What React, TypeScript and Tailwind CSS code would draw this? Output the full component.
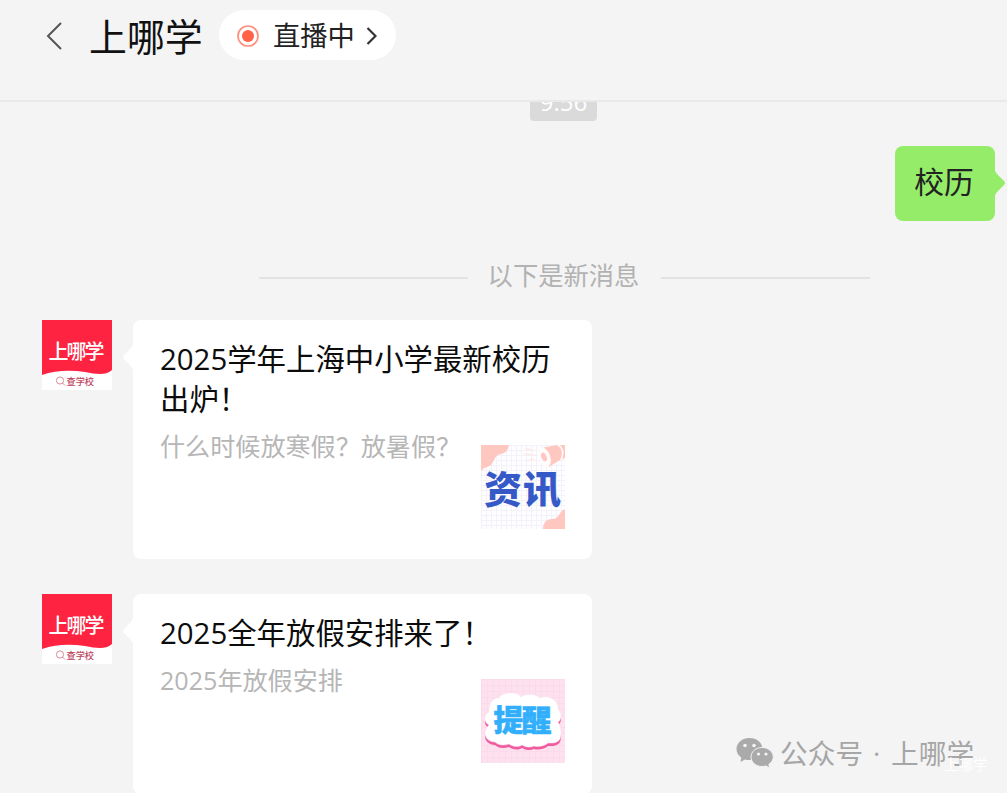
import React from 'react';

interface Message {
  title: string[];
  summary: string;
  thumb: React.ReactNode;
  cardClass: string;
}

function Avatar() {
  return (
    <svg width="70" height="70" viewBox="0 0 70 70" className="shrink-0">
      <rect width="70" height="70" fill="#ffffff" />
      <path d="M0 0H70V50C63 56 54 54 43 52C29 50 14 50 0 55Z" fill="#fd2341" />
      <text
        x="6.5"
        y="39"
        fontSize="20"
        fontWeight="500"
        fill="#ffffff"
        textLength="56"
        fontFamily="'Noto Sans CJK SC', sans-serif"
      >
        上哪学
      </text>
      <circle cx="18" cy="60.5" r="3.6" fill="none" stroke="#d8808f" strokeWidth="0.9" />
      <path d="M20.5 63L23 65.5" stroke="#d8808f" strokeWidth="0.9" />
      <text
        x="24.5"
        y="64.5"
        fontSize="9.2"
        fontWeight="500"
        fill="#bd4560"
        textLength="27.5"
        fontFamily="'Noto Sans CJK SC', sans-serif"
      >
        查学校
      </text>
    </svg>
  );
}

function NewsThumb() {
  return (
    <svg width="84" height="84" viewBox="0 0 84 84">
      <defs>
        <pattern id="news-grid" width="5" height="5" patternUnits="userSpaceOnUse">
          <rect width="5" height="5" fill="#fefdff" />
          <path d="M0 0.5H5M0.5 0V5" stroke="#f3f2f9" strokeWidth="1" />
        </pattern>
      </defs>
      <rect width="84" height="84" fill="url(#news-grid)" />
      <path d="M0 0H28C27 5 25 8 20 9C15 10 14 13 12 17C9 23 4 21 0 26Z" fill="#fec8c0" />
      <path d="M84 84H62C62 78 65 74 71 74C79 74 77 67 84 64Z" fill="#fec8c0" />
      {/* megaphone */}
      <path d="M44 3L52 6M43 9L54 10M45 16L53 14" stroke="#feebe8" strokeWidth="1.6" />
      <path d="M60 3L76 0H84V13L77 16L68 22Z" fill="#fec8c0" />
      <path d="M77 0C82 3 83 8 80 15" fill="none" stroke="#fffafa" strokeWidth="1.6" />
      <ellipse cx="63.5" cy="12" rx="5.6" ry="10" transform="rotate(-22 63.5 12)" fill="#fffdfd" />
      <ellipse cx="63" cy="12" rx="2.6" ry="4.6" transform="rotate(-22 63 12)" fill="#fec8c0" />
      <text
        x="3"
        y="57.5"
        fontSize="38"
        fontWeight="900"
        fill="#3559c7"
        textLength="77"
        fontFamily="'Noto Sans CJK SC', sans-serif"
      >
        资讯
      </text>
    </svg>
  );
}

const CLOUD =
  'M8 33C7 24 13 18 18 19C20 13 37 12 40 18C45 14 56 15 59 19C68 15 78 22 77 30C82 35 80 42 77 43C80 48 81 55 79 60C76 65 69 64 67 64C62 68 56 68 53 67C49 69 44 68 41 66C36 69 31 67 28 65C22 67 17 66 14 63C6 63 2 56 5 51C6 48 7 47 8 46C2 43 3 36 8 33Z';

function ReminderThumb() {
  return (
    <svg width="84" height="84" viewBox="0 0 84 84">
      <defs>
        <pattern id="pink-grid" width="6" height="6" patternUnits="userSpaceOnUse">
          <rect width="6" height="6" fill="#fde1ef" />
          <path d="M0 0.5H6M0.5 0V6" stroke="#fbdaea" strokeWidth="1" />
        </pattern>
      </defs>
      <rect width="84" height="84" fill="url(#pink-grid)" />
      <path d={CLOUD} transform="translate(0 3)" fill="#f25aa0" />
      <path d={CLOUD} fill="#ffffff" stroke="#f6e4ed" strokeWidth="0.5" />
      <text
        x="12.5"
        y="51.5"
        fontSize="30"
        fontWeight="900"
        fill="#31aefc"
        stroke="#31aefc"
        strokeWidth="0.5"
        textLength="58"
        fontFamily="'Noto Sans CJK SC', sans-serif"
      >
        提醒
      </text>
    </svg>
  );
}

const messages: Message[] = [
  {
    title: ['2025学年上海中小学最新校历', '出炉！'],
    summary: '什么时候放寒假？放暑假？',
    thumb: <NewsThumb />,
    cardClass: 'h-[239px]',
  },
  {
    title: ['2025全年放假安排来了！'],
    summary: '2025年放假安排',
    thumb: <ReminderThumb />,
    cardClass: 'h-[200px]',
  },
];

function MessageRow({ title, summary, thumb, cardClass }: Message) {
  return (
    <div className="flex items-start gap-[21px] pl-[42px]">
      <Avatar />
      <div className={`relative w-[459px] rounded-lg bg-white pl-[27px] pr-[27px] pt-[19px] ${cardClass}`}>
        <svg width="12" height="30" viewBox="0 0 12 30" className="absolute -left-[11px] top-[22px]">
          <path d="M12 0C11 3 10 5 8 7L2 13Q0 15 2 17L8 23C10 25 11 27 12 30Z" fill="#ffffff" />
        </svg>
        <h3 className="text-[29.4px] leading-[40px] font-normal text-[#0c0c0c] whitespace-nowrap">
          {title.map((line) => (
            <span key={line} className="block">{line}</span>
          ))}
        </h3>
        <div className="mt-[9px] flex items-start justify-between">
          <p className="text-[25.1px] leading-[36px] font-normal text-[#b6b6b6] whitespace-nowrap">{summary}</p>
          <div className="mt-[17px] shrink-0">{thumb}</div>
        </div>
      </div>
    </div>
  );
}

function Header() {
  return (
    <header className="h-[102px] shrink-0 border-b-2 border-[#e9e9e9] pl-[46px]">
      <div className="flex h-[72px] items-center">
        <svg width="16" height="28" viewBox="0 0 16 28" fill="none" stroke="#555555" strokeWidth="2">
          <path d="M15 1L2 14L15 27" />
        </svg>
        <h1 className="ml-[27px] w-[130px] pb-[1px] text-[37.9px] leading-[50px] text-[#111111] whitespace-nowrap">上哪学</h1>
        <button className="flex h-[50px] w-[177px] -mt-[2px] items-center rounded-full bg-white pl-[18px] pt-[2px]">
          <svg width="22" height="22" viewBox="0 0 22 22">
            <circle cx="11" cy="11" r="10" fill="none" stroke="#ff8f7c" strokeWidth="1.7" />
            <circle cx="11" cy="11" r="6" fill="#ff6246" />
          </svg>
          <span className="ml-[14px] text-[27.3px] leading-[40px] text-[#222222]">直播中</span>
          <svg width="11" height="18" viewBox="0 0 11 18" fill="none" stroke="#333333" strokeWidth="2.2" className="ml-[11px]">
            <path d="M1.5 1L9.5 9L1.5 17" />
          </svg>
        </button>
      </div>
    </header>
  );
}

function WechatLogo() {
  return (
    <svg width="38" height="32" viewBox="0 0 38 32">
      <path
        d="M13.5 1C6.3 1 0.5 5.8 0.5 12C0.5 15.6 2.4 18.6 5.3 20.6L4.5 25L9 22.4C10.4 22.8 12 23 13.5 23C20.7 23 26.5 18.2 26.5 12S20.7 1 13.5 1Z"
        fill="#aaaaaa"
      />
      <path
        d="M26 10.5C19.8 10.5 15 14.8 15 20S19.8 29.5 26 29.5C27.4 29.5 28.7 29.3 29.9 28.9L33.5 31L32.9 27.2C35.6 25.5 37.3 22.9 37.3 20C37.3 14.8 32.4 10.5 26 10.5Z"
        fill="#aaaaaa"
        stroke="#f4f4f4"
        strokeWidth="1"
      />
      <circle cx="9" cy="8.5" r="1.8" fill="#f4f4f4" />
      <circle cx="18" cy="8.5" r="1.8" fill="#f4f4f4" />
      <circle cx="22.5" cy="17" r="1.6" fill="#f4f4f4" />
      <circle cx="30" cy="17" r="1.6" fill="#f4f4f4" />
    </svg>
  );
}

export default function App() {
  return (
    <div className="relative flex h-[793px] w-[1007px] flex-col overflow-hidden bg-[#f4f4f4] font-['Open_Sans','Noto_Sans_CJK_SC',sans-serif]">
      <Header />

      <main className="flex h-[691px] flex-col overflow-hidden">
        <div className="-mt-[16px] ml-[530px] h-[35px] w-[67px] shrink-0 rounded-[4px] bg-[#dadada] text-center text-[24px] leading-[32px] text-white">
          9:56
        </div>

        {/* Outgoing message */}
        <div className="mt-[25px] flex shrink-0 justify-end pr-3">
          <div className="relative flex h-[75px] w-[100px] items-center justify-center rounded-lg bg-[#95ec69] pr-[2px] pb-[2px] text-[29.8px] text-[#222222]">
            校历
            <svg width="12" height="30" viewBox="0 0 12 30" className="absolute -right-[11px] top-[22px]">
              <path d="M0 0C1 3 2 5 4 7L10 13Q12 15 10 17L4 23C2 25 1 27 0 30Z" fill="#95ec69" />
            </svg>
          </div>
        </div>

        {/* New messages divider */}
        <div className="mt-[37px] ml-[259px] flex h-[40px] w-[611px] shrink-0 items-center justify-between">
          <span className="h-[2px] w-[209px] bg-[#e3e3e3]" />
          <span className="-mt-[6px] -ml-[2px] text-[25.3px] leading-[36px] text-[#b2b2b2]">以下是新消息</span>
          <span className="h-[2px] w-[209px] bg-[#e3e3e3]" />
        </div>

        <div className="mt-[22px] flex shrink-0 flex-col gap-[35px]">
          {messages.map((message) => (
            <MessageRow key={message.summary} {...message} />
          ))}
        </div>
      </main>

      {/* Account watermark */}
      <div className="absolute left-[736px] top-[733px] flex h-[40px] items-center text-[27.7px] text-[#a6a6a6] whitespace-nowrap">
        <WechatLogo />
        <span className="ml-[6px] w-[93px] pt-[2px]">公众号</span>
        <span className="w-[18px] pt-[2px]">·</span>
        <span className="pt-[2px]">上哪学</span>
      </div>
      <div className="absolute left-[944px] top-[754px] text-[14.5px] leading-[22px] text-white">上哪学</div>
    </div>
  );
}
